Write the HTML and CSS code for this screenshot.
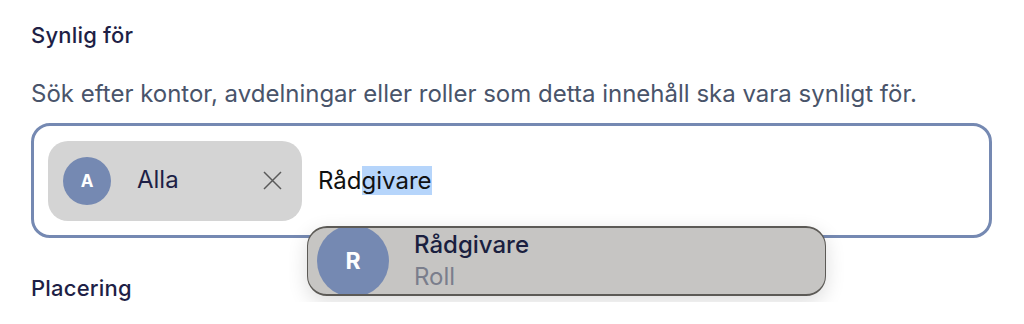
FILE: index.html
```html
<!DOCTYPE html>
<html lang="sv">
  <head>
    <meta charset="UTF-8">
    <title>Synlig för</title>
    <link rel="stylesheet" href="styles.css">
  </head>
  <body>
    <div class="field">
      <div class="label">Synlig för</div>
      <div class="help">Sök efter kontor, avdelningar eller roller som detta innehåll ska vara synligt för.</div>
      <div class="picker">
        <div class="box">
          <div class="chip">
            <span class="avatar">A</span>
            <span class="chip-name">Alla</span>
            <svg class="chip-close" width="19" height="19" viewBox="0 0 19 19">
              <path d="M1 1 L18 18 M18 1 L1 18" stroke="#5a5a5a" stroke-width="1.5" fill="none"/>
            </svg>
          </div>
          <div class="query">Råd<span class="sel">givare</span></div>
        </div>
        <div class="menu">
          <span class="avatar big">R</span>
          <div class="option">
            <div class="option-title">Rådgivare</div>
            <div class="option-sub">Roll</div>
          </div>
        </div>
      </div>
      <div class="label next">Placering</div>
    </div>
  </body>
</html>
```

FILE: styles.css
```css
* {
  margin: 0;
  padding: 0;
  box-sizing: border-box;
}

body {
  background: #fff;
  font-family: Inter, "Liberation Sans", sans-serif;
  padding: 21px 32px 0 31px;
}

.label {
  font-size: 22px;
  font-weight: 500;
  letter-spacing: 0.2px;
  color: #1e1f46;
  line-height: 28px;
}

.help {
  margin-top: 30px;
  font-size: 24px;
  color: #49546a;
  line-height: 30px;
}

.picker {
  position: relative;
  margin-top: 14px;
}

.box {
  width: 961px;
  height: 115px;
  border: 3px solid #7589b2;
  border-radius: 19px;
  padding: 0 14px;
  display: flex;
  align-items: center;
  gap: 16px;
}

.chip {
  width: 254px;
  height: 80px;
  background: #d4d4d4;
  border-radius: 20px;
  display: flex;
  align-items: center;
  padding: 0 20px 0 15px;
}

.avatar {
  width: 48px;
  height: 48px;
  border-radius: 50%;
  background: #7589b2;
  color: #fff;
  font-weight: 700;
  font-size: 17px;
  display: flex;
  align-items: center;
  justify-content: center;
  flex: none;
}

.chip-name {
  margin-left: 26px;
  font-size: 24px;
  color: #1e1f46;
  flex: 1;
  line-height: 29px;
  margin-top: -2px;
}

.chip-close {
  flex: none;
}

.query {
  font-size: 24px;
  color: #111;
  line-height: 29px;
}

.sel {
  background: #b6d5fb;
}

.menu {
  position: absolute;
  left: 276px;
  top: 103px;
  width: 519px;
  height: 70px;
  background: #c6c5c3;
  border: 2px solid #5c5a56;
  border-left-width: 1.5px;
  border-right-width: 1.5px;
  border-radius: 20px;
  box-shadow: 0 6px 20px rgba(0, 0, 0, 0.14);
  display: flex;
  align-items: center;
  overflow: hidden;
  padding-left: 9px;
}

.avatar.big {
  width: 72px;
  height: 72px;
  font-size: 23px;
}

.option {
  margin-left: 25px;
  font-size: 24px;
  line-height: 32px;
  margin-top: -1px;
}

.option-title {
  font-weight: 500;
  color: #1a1f3f;
}

.option-sub {
  color: #7a7e8c;
}

.label.next {
  margin-top: 36px;
}
```
